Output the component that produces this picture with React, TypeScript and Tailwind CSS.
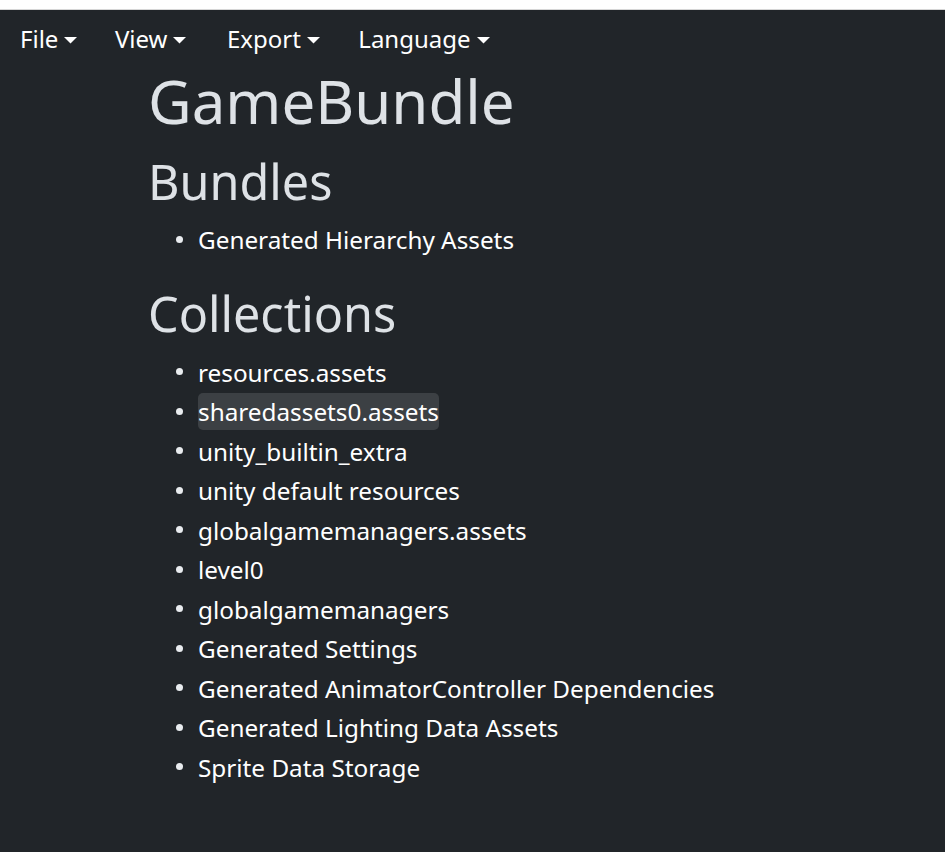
import React from "react";

const collections = [
  "resources.assets",
  "sharedassets0.assets",
  "unity_builtin_extra",
  "unity default resources",
  "globalgamemanagers.assets",
  "level0",
  "globalgamemanagers",
  "Generated Settings",
  "Generated AnimatorController Dependencies",
  "Generated Lighting Data Assets",
  "Sprite Data Storage",
];

function Caret() {
  return (
    <svg width="13" height="7" viewBox="0 0 13 7" className="ml-[6px] mt-[2px]">
      <path d="M0 0 L13 0 L6.5 6.5 Z" fill="#ffffff" />
    </svg>
  );
}

function Item({ text, active }: { text: string; active?: boolean }) {
  return (
    <li className="flex items-center h-[39.5px]">
      <span className="w-[7px] h-[7px] rounded-full bg-[#e9ecef] ml-[28px] mr-[15px] mb-[1px]" />
      <span
        className={
          "inline-block leading-[31px] pt-[3px] pb-[3px] rounded-[5px] " +
          (active ? "bg-[#3c4044]" : "")
        }
      >
        {text}
      </span>
    </li>
  );
}

export default function App() {
  return (
    <div
      className="min-h-[852px] bg-white"
      style={{ fontFamily: '"Noto Sans", "Open Sans", sans-serif' }}
    >
      <div className="h-[10px] bg-white border-b border-[#d6d6d6]" />
      <div className="bg-[#212529] min-h-[842px] text-white">
        <nav className="flex items-center h-[58px] pl-[20px] text-[24px]">
          <div className="flex items-center">File<Caret /></div>
          <div className="flex items-center ml-[37.5px]">View<Caret /></div>
          <div className="flex items-center ml-[40.5px]">Export<Caret /></div>
          <div className="flex items-center ml-[38.5px]">Language<Caret /></div>
        </nav>
        <div className="pl-[148px]">
          <h1 className="text-[60px] leading-[72px] text-[#dee2e6] -mt-[3px]">GameBundle</h1>
          <h2 className="text-[48.5px] leading-[58px] text-[#dee2e6] mt-[14.5px]">Bundles</h2>
          <ul className="text-[24.3px] mt-[10.7px]">
            <Item text="Generated Hierarchy Assets" />
          </ul>
          <h2 className="text-[48.5px] leading-[58px] text-[#dee2e6] mt-[24.3px]">Collections</h2>
          <ul className="text-[24.3px] mt-[10.6px]">
            {collections.map((c, i) => (
              <Item key={c} text={c} active={i === 1} />
            ))}
          </ul>
        </div>
      </div>
    </div>
  );
}
